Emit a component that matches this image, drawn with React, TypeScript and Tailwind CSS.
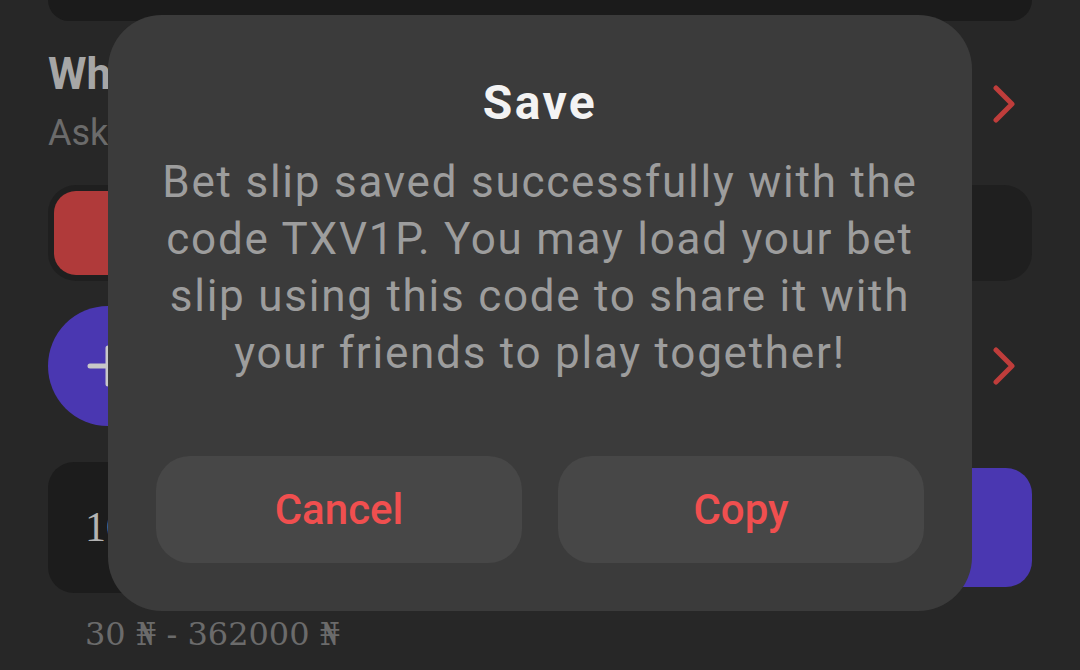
const Chevron = () => (
  <svg width="24" height="38" viewBox="0 0 24 38" fill="none">
    <polyline points="4,3 20,19 4,35" stroke="#bf3d3b" strokeWidth="5" strokeLinecap="round" strokeLinejoin="round" />
  </svg>
);

const SaveDialog = () => {
  return (
    <div className="absolute inset-0 flex justify-center pt-[15px]">
      <div className="w-[864px] h-[596px] bg-[#3b3b3b] rounded-[54px] px-[48px] pt-[60px] pb-[48px] flex flex-col items-center">
        <h2 className="text-[48px] leading-[56px] font-bold tracking-[0.05em] text-[#f3f3f3]">Save</h2>
        <p className="mt-[23px] text-[44px] leading-[57px] tracking-[0.04em] text-center text-[#9d9d9d]">
          Bet slip saved successfully with the code TXV1P. You may load your bet slip using this code to share it with your friends to play together!
        </p>
        <div className="mt-auto w-full grid grid-cols-2 gap-[36px]">
          <button className="h-[107px] rounded-[34px] bg-[#474747] text-[42px] font-medium text-[#f04f4f]">Cancel</button>
          <button className="h-[107px] rounded-[34px] bg-[#474747] text-[42px] font-medium text-[#f04f4f]">Copy</button>
        </div>
      </div>
    </div>
  );
};

export default function App() {
  return (
    <div className="relative w-[1080px] h-[670px] overflow-hidden bg-[#272727] font-['Roboto',sans-serif]">
      <div className="px-12">
        <div className="h-[21px] bg-[#1b1b1b] rounded-b-[22px]" />

        <div className="mt-[27px] flex items-center justify-between">
          <div>
            <div className="text-[44px] leading-[52px] font-bold text-[#a6a6a6]">Who do you want to play with?</div>
            <div className="mt-[11px] text-[36px] leading-[44px] text-[#6b6b6b]">Ask your friends to join the bet</div>
          </div>
          <div className="pr-[16px] pt-[4px]">
            <Chevron />
          </div>
        </div>

        <div className="mt-[30px] h-[96px] bg-[#1f1f1f] rounded-[28px] p-[6px] grid grid-cols-3 text-[33px]">
          <div className="rounded-[22px] bg-[#b03a3a] flex items-center justify-center text-[#e6e6e6]">Public</div>
          <div className="flex items-center justify-center text-[#6b6b6b]">Friends</div>
          <div className="flex items-center justify-center text-[#6b6b6b]">Private players</div>
        </div>

        <div className="mt-[25px] flex items-center justify-between">
          <div className="w-[120px] h-[120px] rounded-full bg-[#4a37b1] flex items-center justify-center">
            <svg width="44" height="44" viewBox="0 0 44 44" fill="none">
              <path d="M22 4v36M4 22h36" stroke="#c8c8c8" strokeWidth="5" strokeLinecap="round" />
            </svg>
          </div>
          <div className="pr-[16px]">
            <Chevron />
          </div>
        </div>

        <div className="mt-[36px] flex items-center gap-[12px]">
          <div className="flex-1 h-[131px] rounded-[26px] bg-[#1c1c1c] flex items-center pl-[37px] text-[42px] text-[#b3b3b3] font-['Liberation_Serif',serif]">
            100
          </div>
          <div className="w-[110px] h-[119px] rounded-[26px] bg-[#4a37b1]" />
        </div>

        <div className="mt-[24px] pl-[37px] text-[32px] leading-[34px] text-[#6b6b6b] font-['DejaVu_Serif',serif]">
          30 ₦ - 362000 ₦
        </div>
      </div>

      <SaveDialog />
    </div>
  );
}
